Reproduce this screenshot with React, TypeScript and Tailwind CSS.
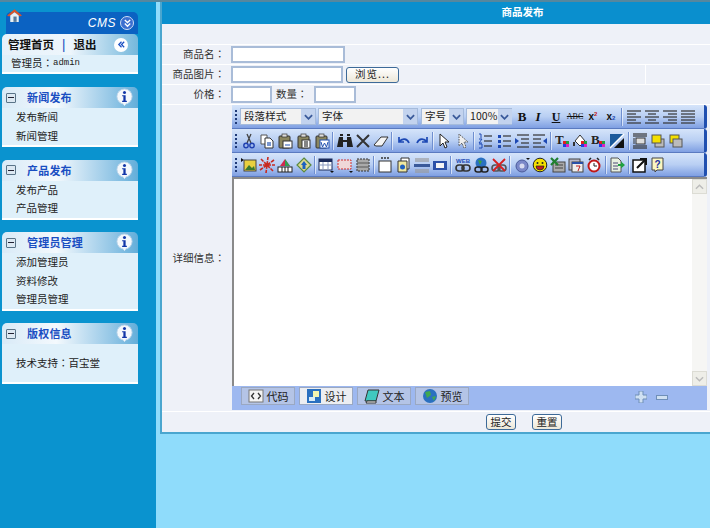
import React from "react";

const S = ({ children, className = "" }: { children: React.ReactNode; className?: string }) => (
  <svg viewBox="0 0 16 16" width="16" height="16" className={className}>{children}</svg>
);

const lines = (ys: number[], x1: number, x2: number, c = "#333") =>
  ys.map((y) => <path key={y} d={`M${x1} ${y}H${x2}`} stroke={c} strokeWidth="1.2" />);

const squares = (
  <>
    <rect x="8" y="8" width="3" height="3" fill="#e02020" />
    <rect x="11" y="8" width="3" height="3" fill="#20a040" />
    <rect x="8" y="11" width="3" height="3" fill="#2040e0" />
    <rect x="11" y="11" width="3" height="3" fill="#e020c0" />
  </>
);

const clip = (c: React.ReactNode) => (
  <>
    <rect x="2" y="3" width="11" height="12" rx="1" fill="#8a8660" stroke="#333" />
    <rect x="5" y="1" width="5" height="3" fill="#ddd" stroke="#333" strokeWidth=".7" />
    {c}
  </>
);

const icons: Record<string, React.ReactNode> = {
  scissors: (<><path d="M6 1l4 9M10 1L6 10" stroke="#444" strokeWidth="1.3" fill="none" /><circle cx="5" cy="12.5" r="2.2" fill="none" stroke="#2040b0" strokeWidth="1.4" /><circle cx="11" cy="12.5" r="2.2" fill="none" stroke="#2040b0" strokeWidth="1.4" /></>),
  copy: (<><path d="M2 2h6v9H2z" fill="#fff" stroke="#555" /><path d="M6 5h5l3 3v7H6z" fill="#fff" stroke="#333" />{lines([10, 12], 8, 12, "#2050b0")}</>),
  paste1: clip(<><rect x="6" y="8" width="9" height="7" fill="#fff" stroke="#333" /><path d="M8 12h5" stroke="#2050b0" /></>),
  paste2: clip(<><rect x="6" y="7" width="8" height="8" fill="#fff" stroke="#333" />{lines([9, 11, 13], 8, 12, "#333")}</>),
  paste3: clip(<><rect x="6" y="7" width="9" height="8" fill="#fff" stroke="#2050b0" /><path d="M7 9l1.5 5 2-4 2 4L14 9" fill="none" stroke="#2050b0" /></>),
  binoculars: (<path d="M0 14l2-10h4v3h4V4h4l2 10h-6V9H6v5zM3 1h3v2H3zM10 1h3v2h-3z" fill="#222" />),
  x: <path d="M2 2l12 12M14 2L2 14" stroke="#333" strokeWidth="2" />,
  eraser: <path d="M1 12l7-8h7l-6 9H3z" fill="#f4f4f4" stroke="#333" />,
  undo: <path d="M3 4v5h5M3 9c3-4 8-4 10 1" fill="none" stroke="#1c48b4" strokeWidth="1.7" />,
  redo: <path d="M13 4v5H8M13 9c-3-4-8-4-10 1" fill="none" stroke="#1c48b4" strokeWidth="1.7" />,
  cursor: <path d="M4 1v12l3-3 2 5 2-1-2-5h4z" fill="#fff" stroke="#222" />,
  cursor2: <path d="M4 1v12l3-3 2 5 2-1-2-5h4z" fill="#eee" stroke="#555" strokeDasharray="1.5 1" />,
  ol: (<><path d="M2 1h2v4M2 6h3L2 10h3M2 11h3v4H2" fill="none" stroke="#1c48b4" />{lines([3, 8, 13], 7, 15)}</>),
  ul: (<><rect x="2" y="2" width="3" height="3" fill="#1c48b4" /><rect x="2" y="7" width="3" height="3" fill="#1c48b4" /><rect x="2" y="12" width="3" height="3" fill="#1c48b4" />{lines([3, 8, 13], 7, 15)}</>),
  outdent: (<>{lines([2, 14], 3, 15)}{lines([6, 10], 7, 15)}<path d="M5 8L1 5v6z" fill="#1c48b4" /></>),
  indent: (<>{lines([2, 14], 1, 13)}{lines([6, 10], 1, 9)}<path d="M11 8l4-3v6z" fill="#1c48b4" /></>),
  tcolor: (<><text x="0" y="11" fontFamily="Liberation Serif" fontWeight="700" fontSize="13" fill="#222">T</text>{squares}</>),
  fill: (<><path d="M2 8l5-6 5 6-5 5z" fill="#fff" stroke="#333" /><path d="M1 9v4" stroke="#333" strokeWidth="2" />{squares}</>),
  bcolor: (<><text x="0" y="11" fontFamily="Liberation Serif" fontWeight="700" fontSize="13" fill="#222">B</text>{squares}</>),
  diag: (<><path d="M1 1h14L1 15z" fill="#1c5a9c" /><path d="M15 5v10H5z" fill="#111" /><path d="M1 15L15 1" stroke="#fff" strokeWidth="1.5" /></>),
  box: (<>{lines([1, 3, 13, 15], 1, 15)}<rect x="4" y="5" width="9" height="6" fill="#ddd" stroke="#333" /><path d="M1 6h2M1 8h2M1 10h2" stroke="#333" /></>),
  y1: (<><rect x="5" y="6" width="9" height="8" fill="#bbb" stroke="#555" /><rect x="2" y="2" width="9" height="8" fill="#f4e000" stroke="#555" /></>),
  y2: (<><rect x="2" y="2" width="9" height="8" fill="#f4e000" stroke="#555" /><rect x="5" y="6" width="9" height="8" fill="#bbb" stroke="#555" /></>),
  image: (<><path d="M0 1l3 2-3 2z" fill="#111" /><rect x="3" y="3" width="12" height="11" fill="#e8d040" stroke="#444" /><path d="M4 13l4-5 3 3 2-2 1 4z" fill="#3a7a30" /></>),
  burst: <path d="M8 8L2 2M8 8l1-8M8 8l7-5M8 8h8M8 8l6 6M8 8l-1 8M8 8l-7 5M8 8H0" stroke="#c82a20" strokeWidth="1.6" strokeDasharray="4 1" />,
  palette: (<><path d="M8 2l5 7H3z" fill="#d02a50" /><path d="M8 2l5 7H8z" fill="#30a050" /><rect x="1" y="10" width="14" height="5" fill="#fff" stroke="#222" /><path d="M5 10v5M8 10v5M11 10v5" stroke="#222" /></>),
  diamond: (<><path d="M8 1l7 7-7 7-7-7z" fill="#dcd890" stroke="#5a8a40" strokeWidth="1.2" /><path d="M8 4l3 4H9.5v4h-3V8H5z" fill="#1c60c0" /></>),
  table: (<><rect x="1" y="2" width="13" height="11" fill="#fff" stroke="#1a2a5a" /><rect x="1" y="2" width="13" height="3" fill="#1a2a5a" /><path d="M1 8h13M5 5v8M10 5v8" stroke="#8a9ac0" /><path d="M12 14h4l-2 2z" fill="#111" /></>),
  dashRed: (<><rect x="1" y="3" width="13" height="9" fill="#f0d8d8" stroke="#d03030" strokeDasharray="2 1" /><path d="M12 14h4l-2 2z" fill="#111" /></>),
  dashGray: (<><rect x="2" y="2" width="12" height="12" fill="#aaa" stroke="#333" strokeDasharray="2 1" />{lines([6, 10], 2, 14, "#666")}</>),
  xyz: (<><rect x="2" y="4" width="12" height="11" fill="#fff" stroke="#333" /><path d="M4 1h2M7 1h2M10 1h2" stroke="#333" strokeWidth="1.5" /></>),
  docball: (<><path d="M5 1h8v11H5z" fill="#fff" stroke="#333" /><path d="M2 4h9v11H2z" fill="#f0e8a0" stroke="#333" /><circle cx="6.5" cy="10" r="2.5" fill="#2060c0" /></>),
  hr: (<>{lines([2, 4, 13, 15], 1, 15, "#999")}<rect x="0" y="7" width="16" height="3" fill="#3a5a9a" /></>),
  film: (<><rect x="1" y="4" width="14" height="9" fill="#2a50a8" /><rect x="4" y="6" width="8" height="5" fill="#f4f4f4" /></>),
  web: (<><text x="8" y="6" textAnchor="middle" fontFamily="Liberation Sans" fontWeight="700" fontSize="6" fill="#1c48b4">WEB</text><rect x="1" y="8" width="8" height="6" rx="3" fill="none" stroke="#333" strokeWidth="1.6" /><rect x="7" y="8" width="8" height="6" rx="3" fill="none" stroke="#333" strokeWidth="1.6" /></>),
  globeLink: (<><circle cx="8" cy="6" r="5.5" fill="#2a70c0" /><path d="M5 3l4 1-2 4z" fill="#3aa040" /><rect x="2" y="10" width="7" height="5" rx="2.5" fill="none" stroke="#222" strokeWidth="1.5" /><rect x="8" y="10" width="7" height="5" rx="2.5" fill="none" stroke="#222" strokeWidth="1.5" /></>),
  xLink: (<><rect x="1" y="8" width="8" height="6" rx="3" fill="none" stroke="#555" strokeWidth="1.6" /><rect x="7" y="8" width="8" height="6" rx="3" fill="none" stroke="#555" strokeWidth="1.6" /><path d="M2 2l12 12M14 2L2 14" stroke="#d82020" strokeWidth="1.8" /></>),
  cd: (<><circle cx="8" cy="9" r="6" fill="#7a88c8" stroke="#4a5a9a" /><circle cx="8" cy="9" r="2.5" fill="#d8dcf0" /><path d="M12 1h4l-2 2z" fill="#111" /></>),
  smile: (<><circle cx="8" cy="8" r="6.8" fill="#f4e000" stroke="#222" /><circle cx="5.5" cy="6" r="1" fill="#222" /><circle cx="10.5" cy="6" r="1" fill="#222" /><path d="M4 9h8a4 4 0 0 1-8 0z" fill="#c02020" stroke="#222" strokeWidth=".7" /></>),
  excel: (<><rect x="3" y="5" width="12" height="10" fill="#aaa" stroke="#444" /><path d="M5 8h8M5 11h8" stroke="#444" /><path d="M1 1l7 7M8 1L1 8" stroke="#208030" strokeWidth="2.2" /></>),
  cal: (<><rect x="1" y="2" width="11" height="11" fill="#b8b8c8" stroke="#444" /><rect x="4" y="5" width="11" height="10" fill="#eee" stroke="#444" /><rect x="4" y="5" width="11" height="2" fill="#2a50a8" /><path d="M8 9h4l-2 5" fill="none" stroke="#c02020" /></>),
  clock: (<><circle cx="8" cy="9" r="5.5" fill="#fff" stroke="#c01818" strokeWidth="2" /><path d="M8 6v3h3" stroke="#222" fill="none" /><path d="M3 3l2-2M13 3l-2-2" stroke="#222" strokeWidth="1.5" /></>),
  docArrow: (<><path d="M2 1h7l3 3v11H2z" fill="#e8f0e0" stroke="#555" />{lines([6, 9, 12], 4, 9, "#668")}<path d="M9 7h3V4.5L16 8l-4 3.5V9H9z" fill="#20a040" /></>),
  popout: (<><rect x="1" y="3" width="12" height="12" fill="#fff" stroke="#111" strokeWidth="1.5" /><path d="M5 11l9-9M8 2h6v6" fill="none" stroke="#111" strokeWidth="2" /></>),
  help: (<><path d="M2 1h11v12H7l-2 2v-2H2z" fill="#fbf6c0" stroke="#444" /><text x="7.5" y="11" textAnchor="middle" fontFamily="Liberation Sans" fontWeight="700" fontSize="10" fill="#2030a0">?</text></>),
  alignL: <>{lines([2, 8, 14], 1, 15, "#333")}{lines([5, 11], 1, 10, "#333")}</>,
  alignC: <>{lines([2, 8, 14], 1, 15, "#333")}{lines([5, 11], 4, 12, "#333")}</>,
  alignR: <>{lines([2, 8, 14], 1, 15, "#333")}{lines([5, 11], 6, 15, "#333")}</>,
  alignJ: <>{lines([2, 5, 8, 11, 14], 1, 15, "#333")}</>,
};

const Ic = ({ n }: { n: string }) => <S>{icons[n]}</S>;

const Colon = () => <span className="font-['Noto_Sans_CJK_TC',sans-serif]">：</span>;

const Sep = () => <div className="mx-[1.25px] h-[18px] w-[2px] border-l border-r border-l-[#6f8fd0] border-r-white/60" />;

const Grip = () => (
  <div className="mr-[3px] ml-[2px] flex h-[16px] w-[2px] flex-col justify-between py-[1px]">
    {[0, 1, 2, 3].map((i) => (
      <div key={i} className="h-[2px] w-[2px] bg-[#1f3a78]" />
    ))}
  </div>
);

const Bar = ({ children }: { children: React.ReactNode }) => (
  <div className="flex h-[24px] items-center overflow-hidden rounded-r-[3px] border-r-[3px] border-b border-r-[#1f4fb0] border-b-[#5a7ac0] bg-gradient-to-b from-[#d5e4fa] via-[#b9cff3] to-[#7f9fe2] pl-[1px]">
    {children}
  </div>
);

const Btn = ({ n }: { n: string }) => (
  <div className="flex h-[18px] w-[18.2px] shrink-0 items-center justify-center">
    <Ic n={n} />
  </div>
);

const Sel = ({ t, w }: { t: string; w: string }) => (
  <div className={`mr-[2px] flex h-[17px] shrink-0 items-center border border-[#a5bbdc] bg-[#f2f2f2] text-[10.5px] text-[#222] ${w}`}>
    <span className="flex-1 whitespace-nowrap pl-[3px] leading-none tracking-[0.1px]">{t}</span>
    <div className="flex h-full w-[14px] shrink-0 items-center justify-center bg-[#c3d3ee]">
      <svg viewBox="0 0 10 6" width="9" height="6"><path d="M1 1l4 4 4-4" fill="none" stroke="#3a5a9a" strokeWidth="2" /></svg>
    </div>
  </div>
);

const Txt = ({ t, cls }: { t: string; cls: string }) => (
  <div className={`flex h-[18px] shrink-0 items-center justify-center ${cls}`}>{t}</div>
);

const Info = () => (
  <svg viewBox="0 0 18 20" width="17" height="19">
    <circle cx="9" cy="9" r="8" fill="#f4f8fc" stroke="#bcd4ea" />
    <path d="M7 16l2 3 2-3z" fill="#f4f8fc" />
    <circle cx="9" cy="4.6" r="1.6" fill="#1236a8" />
    <path d="M6.5 7.5h3.7v6h1.3v1.2h-5v-1.2h1.3V8.7H6.5z" fill="#1236a8" />
  </svg>
);

const Minus = () => (
  <div className="flex h-[10px] w-[10px] shrink-0 items-center justify-center rounded-[1px] border border-[#5a7488] bg-[#dce8f2]">
    <div className="h-px w-[6px] bg-[#223]" />
  </div>
);

const Card = ({ title, body, items, className = "" }: { title: string; body?: string; items: React.ReactNode[]; className?: string }) => (
  <div className={`w-[136px] ${className}`}>
    <div className="flex h-[21px] items-center rounded-t-[5px] bg-gradient-to-r from-[#d8eaf7] via-[#f4f9fd] via-40% to-[#62aeda] pl-[4px]">
      <Minus />
      <span className="ml-[11px] flex-1 text-[11px] leading-none font-bold tracking-[0.2px] text-[#1a4ec2]">{title}</span>
      <div className="mr-[5px]"><Info /></div>
    </div>
    <div className={`border-b-2 border-white bg-[#dff0fa] pl-[14px] text-[10.5px] text-[#222] ${body ?? ""}`}>
      {items.map((it, i) => (
        <div key={i} className="flex h-[18.5px] items-center leading-none">{it}</div>
      ))}
    </div>
  </div>
);

const Inp = ({ w }: { w: string }) => <div className={`h-[17px] shrink-0 border-2 border-[#a9bcd8] bg-white ${w}`} />;

const Label = ({ t }: { t: string }) => (
  <div className="w-[69px] shrink-0 pr-[6px] text-right text-[10.5px] leading-none text-[#333]">{t}<Colon /></div>
);

const Tab = ({ icon, t, active }: { icon: React.ReactNode; t: string; active?: boolean }) => (
  <div className={`flex h-[18px] w-[54px] items-center justify-center gap-[3px] border border-[#9aa8c2] text-[11px] leading-none text-[#222] ${active ? "bg-[#eceef2]" : "bg-[#b4c4e6]"}`}>
    <S>{icon}</S>
    <span>{t}</span>
  </div>
);

const Sm = ({ t, cls }: { t: string; cls: string }) => (
  <div className={`flex h-[16px] items-center justify-center rounded-[3px] border-[1.5px] border-[#3d6a98] bg-gradient-to-b from-white to-[#ece7d8] text-[10.5px] leading-none text-[#222] ${cls}`}>{t}</div>
);

export default function App() {
  return (
    <div className="h-[530px] w-[710px] overflow-hidden bg-white font-['Noto_Sans_CJK_SC','Noto_Sans',sans-serif]">
      <div className="h-[2px] bg-[#56879e]" />
      <div className="flex h-[526px]">
        <aside className="h-full w-[156px] shrink-0 bg-[#0a93cf] pl-[2px] pt-[10px]">
          <div className="relative ml-[4px] flex h-[22px] w-[132px] items-center justify-end rounded-t-[5px] bg-[#0b62c2] pr-[4px]">
            <svg viewBox="0 0 16 16" width="17" height="17" className="absolute left-[0px] -top-[5px]">
              <path d="M1 8l7-6 7 6-2 1-5-4-5 4z" fill="#d8542a" />
              <path d="M4 8l4-3 4 3v6H4z" fill="#e8f0f4" />
              <rect x="7" y="9" width="3" height="5" fill="#5a7a9a" />
            </svg>
            <span className="mr-[4px] font-['Liberation_Sans',sans-serif] text-[12px] leading-none italic tracking-[0.5px] text-white">CMS</span>
            <div className="flex h-[14px] w-[14px] items-center justify-center rounded-full border border-[#cfdcf5] bg-[#3c6fd0]">
              <svg viewBox="0 0 10 10" width="9" height="9"><path d="M2 1l3 3 3-3M2 5l3 3 3-3" fill="none" stroke="#fff" strokeWidth="1.5" /></svg>
            </div>
          </div>
          <div className="w-[136px]">
            <div className="flex h-[21px] items-center rounded-t-[5px] bg-gradient-to-r from-[#e6f1fa] via-[#eef6fc] via-50% to-[#74b8dc] pl-[6px] text-[11.5px] font-bold leading-none text-[#111]">
              <span>管理首页</span>
              <span className="mx-[8px] text-[#1a4ec2]">|</span>
              <span>退出</span>
              <div className="ml-auto mr-[10px] flex h-[14px] w-[14px] items-center justify-center rounded-full bg-white">
                <svg viewBox="0 0 10 10" width="9" height="9"><path d="M5 2L2 5l3 3M8 2L5 5l3 3" fill="none" stroke="#1a4ec2" strokeWidth="1.4" /></svg>
              </div>
            </div>
            <div className="flex h-[19px] items-center border-b-2 border-white bg-[#dff0fa] pl-[9px] text-[10.5px] leading-none text-[#222]">
              <span>管理员<Colon /></span>
              <span className="font-['Liberation_Mono',monospace] text-[9px] leading-none">admin</span>
            </div>
          </div>
          <Card className="mt-[13px]" title="新闻发布" items={["发布新闻", "新闻管理"]} />
          <Card className="mt-[12.5px]" title="产品发布" items={["发布产品", "产品管理"]} />
          <Card className="mt-[12.5px]" title="管理员管理" items={["添加管理员", "资料修改", "管理员管理"]} />
          <Card className="mt-[12.5px]" title="版权信息" body="pt-[10px] pb-[9.5px]" items={[<span>技术支持<Colon />百宝堂</span>]} />
        </aside>
        <main className="h-full flex-1 bg-[#8fdcfb] pl-[4px]">
          <div className="h-[432px] border-l-2 border-b-2 border-[#4aa6cf] bg-[#eef1f8]">
            <div className="flex h-[22px] items-center justify-center bg-[#0a8fce] pb-[2px] pl-[173px] text-[10.5px] font-bold leading-none text-white">商品发布</div>
            <div className="h-[21px] border-b border-white" />
            <div className="flex h-[20px] items-center border-b border-white">
              <Label t="商品名" />
              <Inp w="w-[114px]" />
            </div>
            <div className="flex h-[20px] items-center border-b border-white">
              <Label t="商品图片" />
              <Inp w="w-[112px]" />
              <Sm t="浏览..." cls="ml-[3px] w-[53px] tracking-[1px]" />
              <div className="ml-auto h-full w-[65px] border-l border-white" />
            </div>
            <div className="flex h-[20px] items-center border-b border-white">
              <Label t="价格" />
              <Inp w="w-[41px]" />
              <span className="ml-[4px] w-[38px] text-[10.5px] leading-none text-[#333]">数量<Colon /></span>
              <Inp w="w-[42px]" />
            </div>
            <div className="flex h-[307px] items-center border-b border-white">
              <Label t="详细信息" />
              <div className="ml-[1px] h-[305px] w-[475px] shrink-0 self-start">
                <Bar>
                  <Grip />
                  <Sel t="段落样式" w="w-[76px]" />
                  <Sel t="字体" w="w-[100px]" />
                  <div className="w-[1px] shrink-0" />
                  <Sel t="字号" w="w-[43px]" />
                  <Sel t="100%" w="w-[46px]" />
                  <Txt t="B" cls="w-[16px] font-['Liberation_Serif',serif] text-[13px] font-bold text-[#111]" />
                  <Txt t="I" cls="w-[16px] font-['Liberation_Serif',serif] text-[13px] font-bold italic text-[#111]" />
                  <Txt t="U" cls="w-[20px] font-['Liberation_Serif',serif] text-[12px] font-bold underline text-[#111]" />
                  <Txt t="ABC" cls="w-[18px] font-['Liberation_Serif',serif] text-[8px] line-through text-[#111]" />
                  <div className="flex h-[18px] w-[18px] shrink-0 items-center justify-center text-[10px] font-bold text-[#111] font-['Liberation_Sans',sans-serif]">x<sup className="text-[6px] text-[#c02020]">2</sup></div>
                  <div className="flex h-[18px] w-[18px] shrink-0 items-center justify-center text-[10px] font-bold text-[#111] font-['Liberation_Sans',sans-serif]">x<sub className="text-[6px] text-[#1c48b4]">2</sub></div>
                  <Sep />
                  <Btn n="alignL" />
                  <Btn n="alignC" />
                  <Btn n="alignR" />
                  <Btn n="alignJ" />
                </Bar>
                <Bar>
                  <Grip />
                  <Btn n="scissors" />
                  <Btn n="copy" />
                  <Btn n="paste1" />
                  <Btn n="paste2" />
                  <Btn n="paste3" />
                  <Sep />
                  <Btn n="binoculars" />
                  <Btn n="x" />
                  <Btn n="eraser" />
                  <Sep />
                  <Btn n="undo" />
                  <Btn n="redo" />
                  <Sep />
                  <Btn n="cursor" />
                  <Btn n="cursor2" />
                  <Sep />
                  <Btn n="ol" />
                  <Btn n="ul" />
                  <Btn n="outdent" />
                  <Btn n="indent" />
                  <Sep />
                  <Btn n="tcolor" />
                  <Btn n="fill" />
                  <Btn n="bcolor" />
                  <Btn n="diag" />
                  <Sep />
                  <Btn n="box" />
                  <Btn n="y1" />
                  <Btn n="y2" />
                </Bar>
                <Bar>
                  <Grip />
                  <Btn n="image" />
                  <Btn n="burst" />
                  <Btn n="palette" />
                  <Btn n="diamond" />
                  <Sep />
                  <Btn n="table" />
                  <Btn n="dashRed" />
                  <Btn n="dashGray" />
                  <Sep />
                  <Btn n="xyz" />
                  <Btn n="docball" />
                  <Btn n="hr" />
                  <Btn n="film" />
                  <Sep />
                  <Btn n="web" />
                  <Btn n="globeLink" />
                  <Btn n="xLink" />
                  <Sep />
                  <Btn n="cd" />
                  <Btn n="smile" />
                  <Btn n="excel" />
                  <Btn n="cal" />
                  <Btn n="clock" />
                  <Sep />
                  <Btn n="docArrow" />
                  <Sep />
                  <Btn n="popout" />
                  <Btn n="help" />
                </Bar>
                <div className="flex h-[209px] border-t-2 border-l-2 border-[#8a8a8a] bg-white">
                  <div className="flex-1" />
                  <div className="flex w-[15px] flex-col justify-between bg-[#f6f6f4]">
                    <div className="flex h-[15px] items-center justify-center border border-[#dcdcd4] bg-[#eeeee8]">
                      <svg viewBox="0 0 10 6" width="9" height="6"><path d="M1 5l4-4 4 4" fill="none" stroke="#bbb" strokeWidth="1.6" /></svg>
                    </div>
                    <div className="flex h-[15px] items-center justify-center border border-[#dcdcd4] bg-[#eeeee8]">
                      <svg viewBox="0 0 10 6" width="9" height="6"><path d="M1 1l4 4 4-4" fill="none" stroke="#bbb" strokeWidth="1.6" /></svg>
                    </div>
                  </div>
                </div>
                <div className="flex h-[24px] items-start bg-[#9db8f0] pl-[9px] pt-[1px]">
                  <Tab t="代码" icon={<><rect x="1" y="2" width="14" height="12" fill="#f4f4f4" stroke="#777" /><path d="M6 5L3.5 8 6 11M10 5l2.5 3L10 11" fill="none" stroke="#333" strokeWidth="1.3" /></>} />
                  <div className="w-[4px]" />
                  <Tab active t="设计" icon={<><rect x="1" y="1" width="14" height="14" fill="#2a70c0" /><rect x="7" y="3" width="6" height="6" fill="#f4f4b0" /><rect x="3" y="9" width="6" height="4" fill="#d8ecf8" /></>} />
                  <div className="w-[4px]" />
                  <Tab t="文本" icon={<><path d="M4 2h11l-3 11H1z" fill="#40c8c0" stroke="#333" /><path d="M3 13h9v2H2z" fill="#fff" stroke="#333" /></>} />
                  <div className="w-[4px]" />
                  <Tab t="预览" icon={<><circle cx="8" cy="8" r="7" fill="#2a70c0" /><path d="M3 4l5-1 1 4-4 3zM10 9l4-1-2 5z" fill="#40a850" /></>} />
                  <div className="ml-[166px] mt-[4px] flex items-center gap-[9px]">
                    <svg viewBox="0 0 12 12" width="12" height="12"><path d="M4 0h4v4h4v4H8v4H4V8H0V4h4z" fill="#cfe0f2" stroke="#6f8fb8" /></svg>
                    <div className="h-[5px] w-[12px] border border-[#6f8fb8] bg-[#cfe0f2]" />
                  </div>
                </div>
              </div>
            </div>
            <div className="flex h-[20px] items-center pl-[324px]">
              <Sm t="提交" cls="w-[30px]" />
              <Sm t="重置" cls="ml-[16px] w-[30px]" />
            </div>
          </div>
        </main>
      </div>
    </div>
  );
}
